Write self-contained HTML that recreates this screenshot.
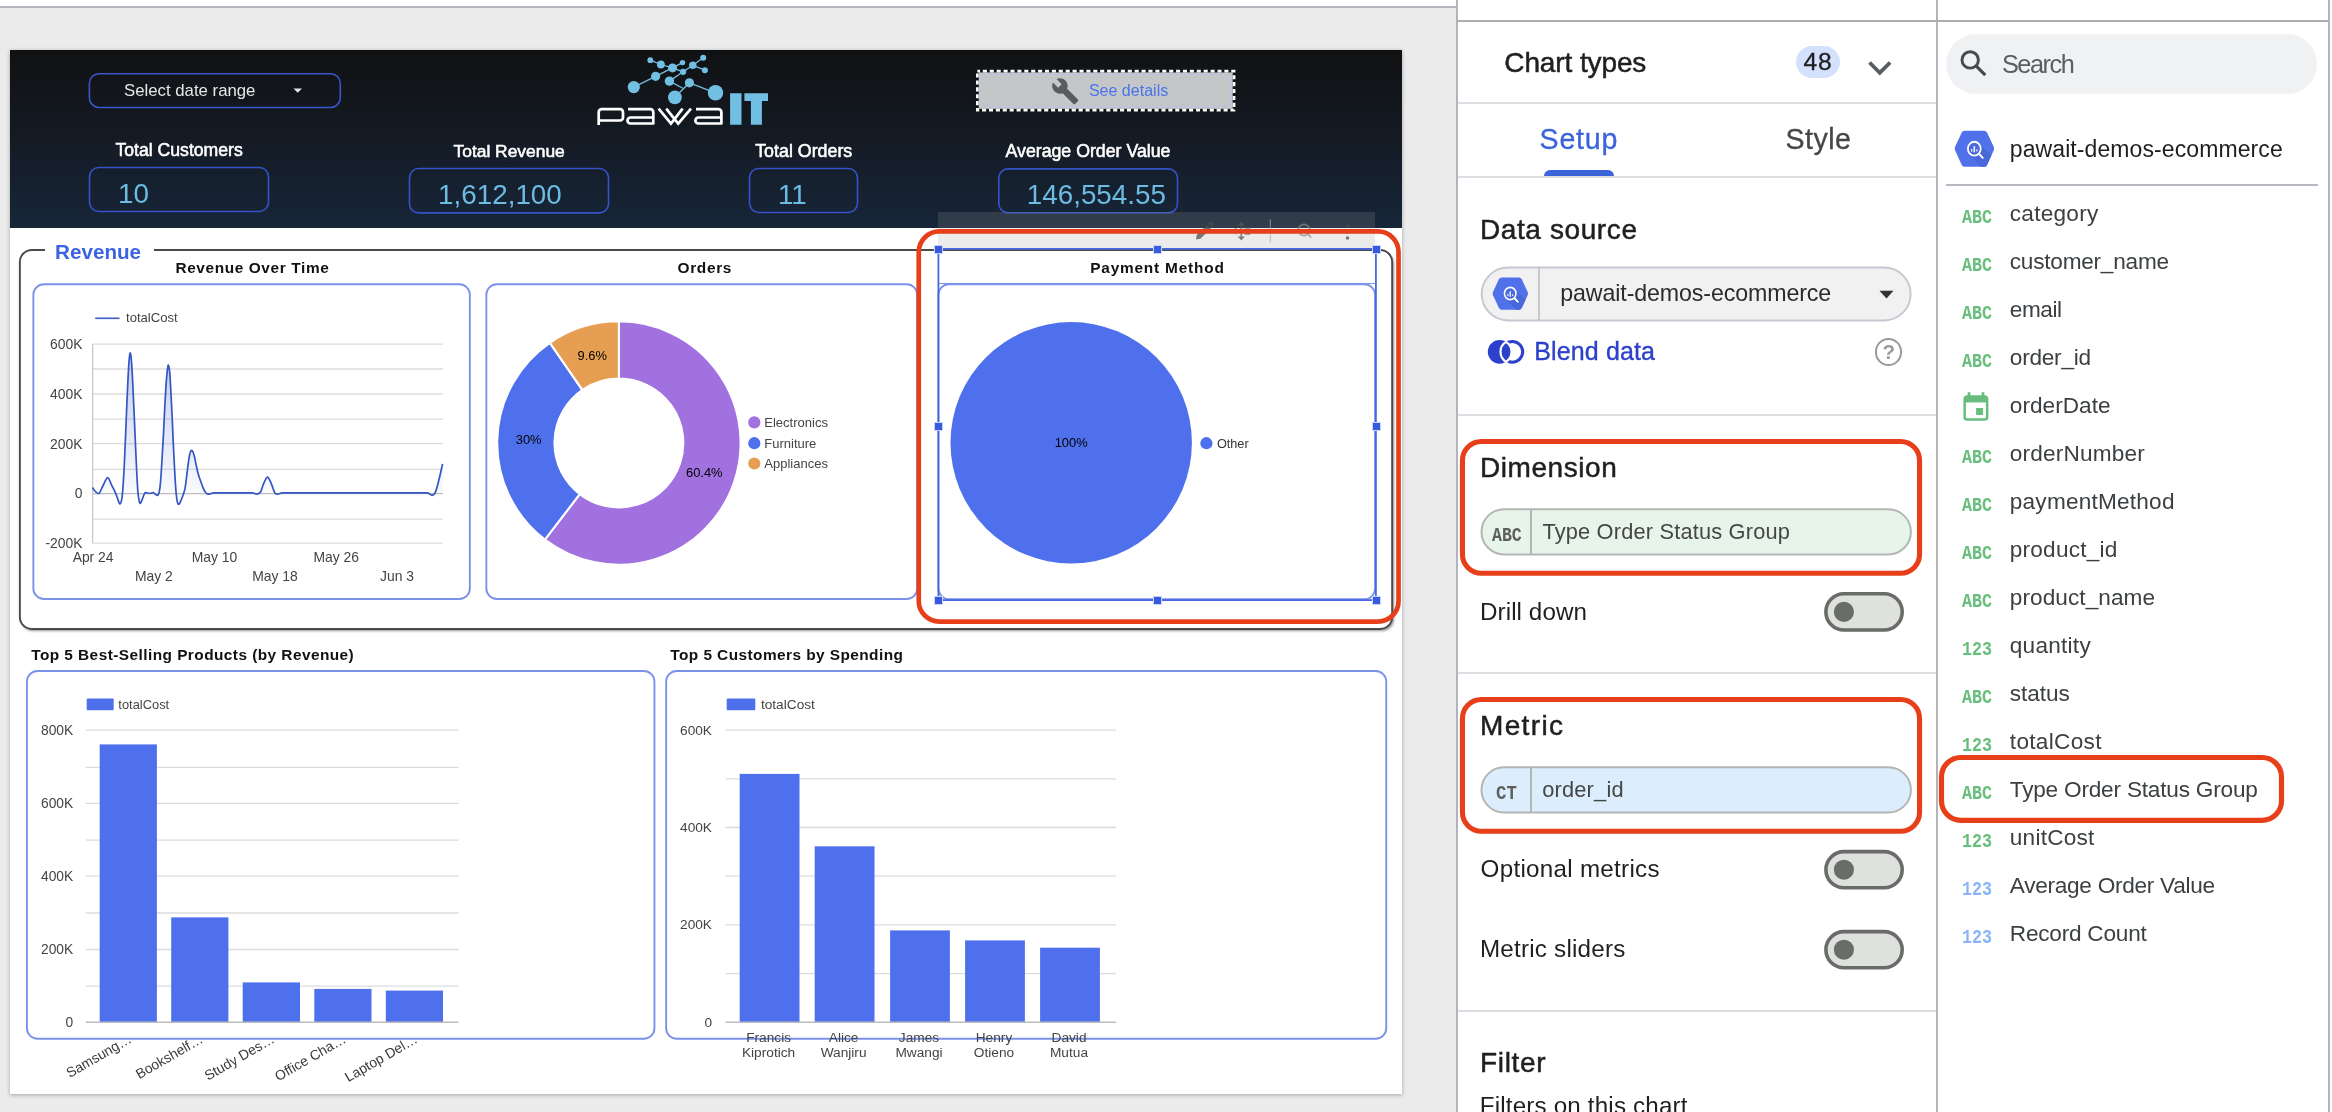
<!DOCTYPE html>
<html>
<head>
<meta charset="utf-8">
<title>Looker Studio</title>
<style>
*{box-sizing:border-box;margin:0;padding:0}
html,body{width:2332px;height:1112px;overflow:hidden;background:#fff}
body{position:relative;font-family:"Liberation Sans",sans-serif;color:#202124}
#root{position:absolute;left:0;top:0;width:2332px;height:1112px;will-change:transform}
.abs{position:absolute}
.t{position:absolute;white-space:nowrap;line-height:1}
/* ---------- workspace ---------- */
#ws{left:0;top:8px;width:1456px;height:1104px;background:#ebebeb}
#topline{left:0;top:6px;width:1457px;height:2px;background:#b4b6bd}
#canvas{left:10px;top:50px;width:1392px;height:1044px;background:#fff;box-shadow:0 1px 4px rgba(0,0,0,.3)}
#hdr{left:10px;top:50px;width:1392px;height:178.2px;background:linear-gradient(180deg,#101113 0%,#111315 8%,#141b25 52%,#172639 100%)}
.q{font-weight:700;-webkit-font-smoothing:antialiased}
.kbox{position:absolute;border:1.5px solid #3550c8;border-radius:10px}
.klabel{color:#fff;font-weight:700;font-size:15.5px}
.kval{color:#6cbbe2;font-size:27.5px}
.cbox{position:absolute;border:1.7px solid #7a91ea;border-radius:11.5px;background:#fff}
.ctitle{font-weight:700;font-size:15.5px;color:#111}
/* ---------- panels ---------- */
.vline{position:absolute;top:0;width:2px;height:1112px;background:#b1b4bd}
.hline{position:absolute;height:2px;background:#dcdee2}
.h1{font-weight:700;font-size:26px;color:#1f1f1f}
.lbl{font-size:24px;color:#1f1f1f}
.pill{position:absolute;left:1480px;width:432px;border:2px solid #b7bab8;border-radius:28px;overflow:hidden}
.tog{position:absolute;left:1824px;width:80px;height:39px;border:3.5px solid #6c6f6c;border-radius:20px;background:#dfe1de}
.tog i{position:absolute;left:6px;top:6px;width:20px;height:20px;border-radius:50%;background:#6c6f6c}
.red{position:absolute;border:5px solid #e73f1a;border-radius:21.5px}
.fld{font-size:23px;color:#3c4043;left:2010px}
.ico{position:absolute;left:1962px;font-family:"Liberation Mono",monospace;font-weight:700;font-size:19px;line-height:1;letter-spacing:-1.6px;transform-origin:0 0;transform:scale(.92,1.12)}
.g{color:#5bb974}.b{color:#8ab4f8}
</style>
</head>
<body>
<div id="root">
<!-- WORKSPACE -->
<div id="ws" class="abs"></div>
<div id="topline" class="abs"></div>
<div id="canvas" class="abs"></div>
<div id="hdr" class="abs"></div>
<svg class="abs" style="left:84px;top:68px;" width="262" height="45" viewBox="84 68 262 45"><rect x="89.40" y="73.70" width="250.90" height="33.80" rx="9.70" fill="none" stroke="#3a56cc" stroke-width="1.6"/></svg>
<div class="t " style="left:124.0px;top:83.0px;font-size:16.78px;color:#e6e6e6;">Select date range</div>
<svg class="abs" style="left:293px;top:88px" width="10" height="6"><path d="M0.5 0.5 L9 0.5 L4.75 4.8 Z" fill="#e6e6e6"/></svg>
<div class="t " style="left:115.5px;top:142.0px;font-size:17.62px;color:#fff;-webkit-text-stroke:.55px #fff;">Total Customers</div>
<svg class="abs" style="left:84px;top:162px;" width="190" height="55" viewBox="84 162 190 55"><rect x="89.50" y="167.50" width="179.00" height="44.00" rx="9.20" fill="none" stroke="#3652c9" stroke-width="1.6"/></svg>
<div class="t " style="left:118.1px;top:180.0px;font-size:27.80px;color:#6cbbe2;">10</div>
<div class="t " style="left:453.5px;top:143.0px;font-size:17.41px;color:#fff;-webkit-text-stroke:.55px #fff;">Total Revenue</div>
<svg class="abs" style="left:404px;top:163px;" width="210" height="55" viewBox="404 163 210 55"><rect x="409.50" y="168.50" width="199.00" height="44.40" rx="9.20" fill="none" stroke="#3652c9" stroke-width="1.6"/></svg>
<div class="t " style="left:438.1px;top:181.0px;font-size:27.80px;color:#6cbbe2;">1,612,100</div>
<div class="t " style="left:755.2px;top:143.0px;font-size:17.83px;color:#fff;-webkit-text-stroke:.55px #fff;">Total Orders</div>
<svg class="abs" style="left:744px;top:163px;" width="119" height="55" viewBox="744 163 119 55"><rect x="749.50" y="168.50" width="108.00" height="44.00" rx="9.20" fill="none" stroke="#3652c9" stroke-width="1.6"/></svg>
<div class="t " style="left:777.9px;top:181.0px;font-size:27.80px;color:#6cbbe2;">11</div>
<div class="t " style="left:1005.5px;top:143.0px;font-size:17.74px;color:#fff;-webkit-text-stroke:.55px #fff;">Average Order Value</div>
<svg class="abs" style="left:994px;top:164px;" width="189" height="54" viewBox="994 164 189 54"><rect x="998.80" y="168.90" width="178.70" height="43.90" rx="9.20" fill="none" stroke="#3652c9" stroke-width="1.6"/></svg>
<div class="t " style="left:1026.8px;top:180.8px;font-size:27.80px;color:#6cbbe2;">146,554.55</div>
<svg class="abs" style="left:970px;top:64px" width="272" height="54" viewBox="970 64 272 54"><rect x="977.35" y="71.1" width="256.7" height="39.1" fill="#c5c6c8" stroke="#101214" stroke-width="2.700"/><rect x="977.35" y="71.1" width="256.7" height="39.1" fill="none" stroke="#fbfbfb" stroke-width="2.700" stroke-dasharray="4.100 2.800" stroke-dashoffset="1.400"/><rect x="980.6" y="74.3" width="250.200" height="32.700" rx="8.500" fill="none" stroke="#b4c5f4" stroke-width="1.100" stroke-dasharray="3.500 1.500"/></svg>
<div class="t " style="left:1088.9px;top:82.0px;font-size:16.05px;color:#4a74ea;">See details</div>
<svg class="abs" style="left:1051px;top:76.5px" width="28.500" height="28.500" viewBox="0 0 24 24"><path fill="#585b60" d="M22.7 19l-9.1-9.1c.9-2.3.4-5-1.500-6.900-2-2-5-2.400-7.400-1.300L9 6 6 9 1.600 4.700C.4 7.100.900 10.100 2.900 12.100c1.900 1.900 4.600 2.400 6.900 1.500l9.100 9.100c.4.400 1 .400 1.400 0l2.300-2.300c.5-.400.5-1.100.1-1.400z"/></svg>
<svg class="abs" style="left:0;top:0" width="1456" height="240" viewBox="0 0 1456 240">
<g stroke="#72bfe4" stroke-width="1.3" fill="none">
<line x1="650.3" y1="60.2" x2="660.9" y2="64.5"/>
<line x1="660.9" y1="64.5" x2="672.5" y2="67.9"/>
<line x1="672.5" y1="67.9" x2="682.5" y2="62.6"/>
<line x1="672.5" y1="67.9" x2="655.6" y2="76.3"/>
<line x1="655.6" y1="76.3" x2="633.8" y2="87.1"/>
<line x1="672.5" y1="67.9" x2="683.1" y2="71.8"/>
<line x1="683.1" y1="71.8" x2="692.8" y2="65.3"/>
<line x1="692.8" y1="65.3" x2="703.2" y2="57.7"/>
<line x1="692.8" y1="65.3" x2="704.9" y2="70.2"/>
<line x1="683.1" y1="71.8" x2="669.4" y2="81.1"/>
<line x1="689.4" y1="82.8" x2="674.9" y2="97.3"/>
<line x1="689.4" y1="82.8" x2="715.5" y2="92.8"/>
<line x1="669.4" y1="81.1" x2="682.9" y2="88.3"/>
</g><g fill="#72bfe4">
<circle cx="650.3" cy="60.2" r="2.9"/>
<circle cx="660.9" cy="64.5" r="3.9"/>
<circle cx="672.5" cy="67.9" r="4.5"/>
<circle cx="682.5" cy="62.6" r="2.7"/>
<circle cx="692.8" cy="65.3" r="3.7"/>
<circle cx="703.2" cy="57.7" r="3.0"/>
<circle cx="704.9" cy="70.2" r="3.0"/>
<circle cx="683.1" cy="71.8" r="3.1"/>
<circle cx="655.6" cy="76.3" r="4.6"/>
<circle cx="669.4" cy="81.1" r="4.7"/>
<circle cx="689.4" cy="82.8" r="4.6"/>
<circle cx="633.8" cy="87.1" r="6.1"/>
<circle cx="674.9" cy="97.3" r="6.9"/>
<circle cx="715.5" cy="92.8" r="7.7"/>
</g>
<path fill="#72bfe4" d="M730.1 93.2h11.400v31.600h-11.400z M744.4 93.2h23.600v7.700h-6.100v23.900h-11v-23.900h-6.500z"/>
<g stroke="#fff" stroke-width="2.7" fill="none" stroke-linejoin="round" stroke-linecap="butt">
<path d="M598.7 124.9 V112.2 a3 3 0 0 1 3 -3 H620 a3 3 0 0 1 3 3 V117.5 a3 3 0 0 1 -3 3 H598.7"/>
<path d="M628.1 109.2 H650.3 a3 3 0 0 1 3 3 V123.5 H630.5 a3 3 0 0 1 -3 -3 a3 3 0 0 1 3 -3 H653.3"/>
<path d="M696.0 109.2 H718.4 a3 3 0 0 1 3 3 V123.5 H698.4 a3 3 0 0 1 -3 -3 a3 3 0 0 1 3 -3 H721.4"/>
<path stroke-linejoin="miter" d="M658.6 108.6 L671 123.6 L682.6 108.6 M666.2 108.6 L678.2 123.6 L691 108.6"/>
</g></svg>
<div class="abs" style="left:20px;top:250px;width:1372px;height:379px;border-radius:12px;box-shadow:1.500px 2px 2.500px rgba(0,0,0,.42)"></div>
<svg class="abs" style="left:14px;top:245px;" width="1384" height="389" viewBox="14 245 1384 389"><rect x="19.85" y="249.95" width="1372.30" height="379.00" rx="12.05" fill="#fff" stroke="#4a4a4a" stroke-width="1.9"/></svg>
<div class="abs" style="left:44.5px;top:246px;width:109.500px;height:8px;background:#fff"></div>
<div class="t " style="left:55.1px;top:241.5px;font-size:20.63px;color:#3b64e2;font-weight:700;">Revenue</div>
<svg class="abs" style="left:28px;top:279px;" width="447" height="325" viewBox="28 279 447 325"><rect x="33.35" y="284.25" width="436.50" height="314.70" rx="10.55" fill="#fff" stroke="#7b92ea" stroke-width="1.9"/></svg>
<svg class="abs" style="left:481px;top:279px;" width="442" height="325" viewBox="481 279 442 325"><rect x="486.35" y="284.25" width="430.90" height="314.70" rx="10.55" fill="#fff" stroke="#7b92ea" stroke-width="1.9"/></svg>
<svg class="abs" style="left:933px;top:279px;" width="447" height="326" viewBox="933 279 447 326"><rect x="938.45" y="284.25" width="436.60" height="314.90" rx="10.55" fill="#fff" stroke="#7b92ea" stroke-width="1.9"/></svg>
<div class="t " style="left:175.4px;top:260.0px;font-size:15.40px;color:#111;letter-spacing:0.62px;font-weight:700;">Revenue Over Time</div>
<div class="t " style="left:677.6px;top:260.0px;font-size:15.40px;color:#111;letter-spacing:0.66px;font-weight:700;">Orders</div>
<div class="t " style="left:1090.2px;top:260.0px;font-size:15.40px;color:#111;letter-spacing:0.81px;font-weight:700;">Payment Method</div>
<svg class="abs" style="left:22px;top:666px;" width="638" height="378" viewBox="22 666 638 378"><rect x="26.95" y="671.05" width="627.50" height="367.70" rx="10.55" fill="none" stroke="#7b92ea" stroke-width="1.9"/></svg>
<svg class="abs" style="left:661px;top:666px;" width="731" height="378" viewBox="661 666 731 378"><rect x="666.15" y="671.05" width="720.10" height="367.70" rx="10.55" fill="none" stroke="#7b92ea" stroke-width="1.9"/></svg>
<div class="t " style="left:31.2px;top:646.5px;font-size:15.40px;color:#111;letter-spacing:0.45px;font-weight:700;">Top 5 Best-Selling Products (by Revenue)</div>
<div class="t " style="left:670.3px;top:646.5px;font-size:15.40px;color:#111;letter-spacing:0.44px;font-weight:700;">Top 5 Customers by Spending</div>
<svg class="abs" style="left:0;top:0" width="1456" height="1112" viewBox="0 0 1456 1112" font-family="Liberation Sans, sans-serif">
<defs><linearGradient id="ar" x1="0" y1="353" x2="0" y2="493" gradientUnits="userSpaceOnUse"><stop offset="0" stop-color="#3a5cc8" stop-opacity=".30"/><stop offset="1" stop-color="#3a5cc8" stop-opacity=".03"/></linearGradient></defs>
<line x1="92.6" x2="443.0" y1="344.1" y2="344.1" stroke="#dcdcdc" stroke-width="1.3"/>
<line x1="92.6" x2="443.0" y1="369" y2="369" stroke="#dcdcdc" stroke-width="1.3"/>
<line x1="92.6" x2="443.0" y1="394" y2="394" stroke="#dcdcdc" stroke-width="1.3"/>
<line x1="92.6" x2="443.0" y1="419.2" y2="419.2" stroke="#dcdcdc" stroke-width="1.3"/>
<line x1="92.6" x2="443.0" y1="443.6" y2="443.6" stroke="#dcdcdc" stroke-width="1.3"/>
<line x1="92.6" x2="443.0" y1="469.4" y2="469.4" stroke="#dcdcdc" stroke-width="1.3"/>
<line x1="92.6" x2="443.0" y1="493.6" y2="493.6" stroke="#bdbdbd" stroke-width="1.3"/>
<line x1="92.6" x2="443.0" y1="519.2" y2="519.2" stroke="#dcdcdc" stroke-width="1.3"/>
<line x1="92.6" x2="443.0" y1="543.2" y2="543.2" stroke="#dcdcdc" stroke-width="1.3"/>
<line x1="92.6" x2="92.6" y1="344" y2="543" stroke="#c8c8c8" stroke-width="1.3"/>
<text x="82.5" y="349.0" font-size="13.9" fill="#444" text-anchor="end">600K</text>
<text x="82.5" y="398.79999999999995" font-size="13.9" fill="#444" text-anchor="end">400K</text>
<text x="82.5" y="448.5" font-size="13.9" fill="#444" text-anchor="end">200K</text>
<text x="82.5" y="498.09999999999997" font-size="13.9" fill="#444" text-anchor="end">0</text>
<text x="82.5" y="547.9" font-size="13.9" fill="#444" text-anchor="end">-200K</text>
<text x="93.1" y="561.9" font-size="13.9" fill="#444" text-anchor="middle">Apr 24</text>
<text x="214.5" y="561.9" font-size="13.9" fill="#444" text-anchor="middle">May 10</text>
<text x="336.3" y="561.9" font-size="13.9" fill="#444" text-anchor="middle">May 26</text>
<text x="153.8" y="580.5" font-size="13.9" fill="#444" text-anchor="middle">May 2</text>
<text x="275" y="580.5" font-size="13.9" fill="#444" text-anchor="middle">May 18</text>
<text x="397" y="580.5" font-size="13.9" fill="#444" text-anchor="middle">Jun 3</text>
<line x1="95.2" x2="119.5" y1="318.3" y2="318.3" stroke="#3a5cc8" stroke-width="1.6"/>
<text x="126" y="322.3" font-size="13.1" fill="#444">totalCost</text>
<path d="M92.5 487.6 C93.4 488.8 94.4 490.5 95.3 491.3 C96.5 492.4 97.8 494.2 99.0 493.4 C100.2 492.6 101.4 488.7 102.6 486.5 C104.3 483.4 106.0 477.9 107.7 477.6 C109.0 477.4 110.2 482.3 111.5 484.8 C112.8 487.4 114.2 489.9 115.5 492.9 C116.3 494.7 117.1 497.4 117.9 499.4 C118.6 501.1 119.3 504.2 120.0 503.9 C120.7 503.6 121.3 502.1 122.0 497.8 C122.4 495.0 122.9 488.7 123.3 482.4 C123.7 477.1 124.0 470.6 124.4 463.0 C124.8 455.5 125.1 445.9 125.5 437.1 C125.8 429.1 126.2 420.6 126.5 412.8 C126.9 403.4 127.3 393.7 127.7 385.3 C128.1 376.9 128.5 367.5 128.9 362.7 C129.4 356.7 129.9 352.6 130.4 352.9 C130.8 353.1 131.3 358.4 131.7 364.3 C132.1 370.3 132.6 379.8 133.0 388.6 C133.4 396.0 133.7 404.6 134.1 412.8 C134.5 421.8 134.9 431.2 135.3 440.3 C135.7 450.1 136.2 460.8 136.6 469.5 C137.0 477.5 137.4 485.4 137.8 490.5 C138.2 495.6 138.6 498.1 139.0 500.2 C139.4 502.5 139.9 503.6 140.3 503.5 C140.9 503.3 141.6 500.9 142.2 499.4 C143.0 497.5 143.8 494.8 144.6 493.4 C145.0 492.6 145.5 492.7 145.9 492.7 C146.6 492.7 147.2 493.1 147.9 493.2 C149.0 493.3 150.0 493.3 151.1 493.2 C151.9 493.1 152.7 492.5 153.5 492.7 C154.3 492.9 155.2 494.1 156.0 494.6 C156.5 495.0 157.1 495.8 157.6 495.4 C158.1 495.0 158.7 494.5 159.2 492.1 C159.6 490.2 160.1 487.2 160.5 482.4 C160.9 477.5 161.4 470.0 161.8 463.0 C162.3 454.9 162.8 446.4 163.3 437.1 C163.7 429.7 164.1 420.6 164.5 412.8 C164.9 404.4 165.4 395.1 165.8 388.6 C166.3 381.1 166.8 375.2 167.3 370.7 C167.7 367.4 168.0 364.8 168.4 365.1 C168.8 365.4 169.3 367.8 169.7 372.4 C170.1 376.7 170.5 384.6 170.9 391.8 C171.3 399.7 171.8 408.3 172.2 417.7 C172.6 425.6 172.9 435.7 173.3 443.6 C173.7 453.0 174.2 461.7 174.6 469.5 C175.0 477.3 175.5 485.3 175.9 490.5 C176.4 496.1 176.8 499.7 177.3 501.8 C177.9 504.3 178.4 504.5 179.0 504.3 C179.7 504.0 180.4 501.8 181.1 500.2 C181.9 498.3 182.7 496.1 183.5 493.7 C184.0 492.1 184.6 491.1 185.1 488.1 C185.6 485.1 186.2 480.1 186.7 475.9 C187.2 471.7 187.8 466.7 188.3 463.0 C188.9 459.1 189.4 455.3 190.0 453.3 C190.6 451.1 191.3 450.2 191.9 450.5 C192.6 450.8 193.3 452.5 194.0 454.9 C194.7 457.2 195.4 461.4 196.1 464.6 C196.8 467.6 197.4 471.0 198.1 473.5 C198.9 476.4 199.7 478.5 200.5 480.8 C201.3 483.1 202.1 485.4 202.9 487.3 C203.7 489.2 204.5 491.0 205.3 492.1 C206.1 493.3 207.0 493.9 207.8 494.1 C208.9 494.4 209.9 493.9 211.0 493.7 C211.8 493.5 212.6 492.9 213.4 492.9 C226.5 492.9 239.5 492.9 252.6 492.9 C254.1 492.9 255.6 494.4 257.1 494.2 C258.3 494.0 259.5 493.7 260.7 491.8 C261.6 490.4 262.5 486.0 263.4 484.1 C264.8 481.1 266.1 477.3 267.5 477.1 C268.7 477.0 269.9 480.6 271.1 483.2 C272.3 485.8 273.5 490.6 274.7 492.7 C275.6 494.3 276.5 494.2 277.4 494.2 C279.0 494.2 280.7 492.9 282.3 492.9 C330.6 492.9 379.0 492.9 427.3 492.9 C429.0 492.9 430.6 495.5 432.3 495.4 C433.3 495.3 434.4 494.6 435.4 492.2 C436.6 489.4 437.8 484.3 439.0 479.6 C440.2 474.9 441.4 469.1 442.6 463.9 L442.6 493.3 L92.5 493.3 Z" fill="url(#ar)"/>
<path d="M92.5 487.6 C93.4 488.8 94.4 490.5 95.3 491.3 C96.5 492.4 97.8 494.2 99.0 493.4 C100.2 492.6 101.4 488.7 102.6 486.5 C104.3 483.4 106.0 477.9 107.7 477.6 C109.0 477.4 110.2 482.3 111.5 484.8 C112.8 487.4 114.2 489.9 115.5 492.9 C116.3 494.7 117.1 497.4 117.9 499.4 C118.6 501.1 119.3 504.2 120.0 503.9 C120.7 503.6 121.3 502.1 122.0 497.8 C122.4 495.0 122.9 488.7 123.3 482.4 C123.7 477.1 124.0 470.6 124.4 463.0 C124.8 455.5 125.1 445.9 125.5 437.1 C125.8 429.1 126.2 420.6 126.5 412.8 C126.9 403.4 127.3 393.7 127.7 385.3 C128.1 376.9 128.5 367.5 128.9 362.7 C129.4 356.7 129.9 352.6 130.4 352.9 C130.8 353.1 131.3 358.4 131.7 364.3 C132.1 370.3 132.6 379.8 133.0 388.6 C133.4 396.0 133.7 404.6 134.1 412.8 C134.5 421.8 134.9 431.2 135.3 440.3 C135.7 450.1 136.2 460.8 136.6 469.5 C137.0 477.5 137.4 485.4 137.8 490.5 C138.2 495.6 138.6 498.1 139.0 500.2 C139.4 502.5 139.9 503.6 140.3 503.5 C140.9 503.3 141.6 500.9 142.2 499.4 C143.0 497.5 143.8 494.8 144.6 493.4 C145.0 492.6 145.5 492.7 145.9 492.7 C146.6 492.7 147.2 493.1 147.9 493.2 C149.0 493.3 150.0 493.3 151.1 493.2 C151.9 493.1 152.7 492.5 153.5 492.7 C154.3 492.9 155.2 494.1 156.0 494.6 C156.5 495.0 157.1 495.8 157.6 495.4 C158.1 495.0 158.7 494.5 159.2 492.1 C159.6 490.2 160.1 487.2 160.5 482.4 C160.9 477.5 161.4 470.0 161.8 463.0 C162.3 454.9 162.8 446.4 163.3 437.1 C163.7 429.7 164.1 420.6 164.5 412.8 C164.9 404.4 165.4 395.1 165.8 388.6 C166.3 381.1 166.8 375.2 167.3 370.7 C167.7 367.4 168.0 364.8 168.4 365.1 C168.8 365.4 169.3 367.8 169.7 372.4 C170.1 376.7 170.5 384.6 170.9 391.8 C171.3 399.7 171.8 408.3 172.2 417.7 C172.6 425.6 172.9 435.7 173.3 443.6 C173.7 453.0 174.2 461.7 174.6 469.5 C175.0 477.3 175.5 485.3 175.9 490.5 C176.4 496.1 176.8 499.7 177.3 501.8 C177.9 504.3 178.4 504.5 179.0 504.3 C179.7 504.0 180.4 501.8 181.1 500.2 C181.9 498.3 182.7 496.1 183.5 493.7 C184.0 492.1 184.6 491.1 185.1 488.1 C185.6 485.1 186.2 480.1 186.7 475.9 C187.2 471.7 187.8 466.7 188.3 463.0 C188.9 459.1 189.4 455.3 190.0 453.3 C190.6 451.1 191.3 450.2 191.9 450.5 C192.6 450.8 193.3 452.5 194.0 454.9 C194.7 457.2 195.4 461.4 196.1 464.6 C196.8 467.6 197.4 471.0 198.1 473.5 C198.9 476.4 199.7 478.5 200.5 480.8 C201.3 483.1 202.1 485.4 202.9 487.3 C203.7 489.2 204.5 491.0 205.3 492.1 C206.1 493.3 207.0 493.9 207.8 494.1 C208.9 494.4 209.9 493.9 211.0 493.7 C211.8 493.5 212.6 492.9 213.4 492.9 C226.5 492.9 239.5 492.9 252.6 492.9 C254.1 492.9 255.6 494.4 257.1 494.2 C258.3 494.0 259.5 493.7 260.7 491.8 C261.6 490.4 262.5 486.0 263.4 484.1 C264.8 481.1 266.1 477.3 267.5 477.1 C268.7 477.0 269.9 480.6 271.1 483.2 C272.3 485.8 273.5 490.6 274.7 492.7 C275.6 494.3 276.5 494.2 277.4 494.2 C279.0 494.2 280.7 492.9 282.3 492.9 C330.6 492.9 379.0 492.9 427.3 492.9 C429.0 492.9 430.6 495.5 432.3 495.4 C433.3 495.3 434.4 494.6 435.4 492.2 C436.6 489.4 437.8 484.3 439.0 479.6 C440.2 474.9 441.4 469.1 442.6 463.9" fill="none" stroke="#3356c2" stroke-width="1.7" stroke-linejoin="round"/>
<path d="M618.90 321.30 A121.7 121.7 0 1 1 544.91 539.63 L579.75 494.13 A64.4 64.4 0 1 0 618.90 378.60 Z" fill="#a071df" stroke="#fff" stroke-width="2.1"/>
<path d="M544.91 539.63 A121.7 121.7 0 0 1 549.86 342.78 L582.37 389.96 A64.4 64.4 0 0 0 579.75 494.13 Z" fill="#4f70ec" stroke="#fff" stroke-width="2.1"/>
<path d="M549.86 342.78 A121.7 121.7 0 0 1 618.90 321.30 L618.90 378.60 A64.4 64.4 0 0 0 582.37 389.96 Z" fill="#e69f52" stroke="#fff" stroke-width="2.1"/>
<text x="592.3" y="360.4" font-size="12.9" fill="#000" text-anchor="middle">9.6%</text>
<text x="528.7" y="444.2" font-size="12.9" fill="#000" text-anchor="middle">30%</text>
<text x="704.3" y="476.59999999999997" font-size="12.9" fill="#000" text-anchor="middle">60.4%</text>
<circle cx="754.3" cy="422.4" r="6.1" fill="#a071df"/>
<text x="764.3" y="426.9" font-size="13" fill="#444">Electronics</text>
<circle cx="754.3" cy="443.2" r="6.1" fill="#4f70ec"/>
<text x="764.3" y="447.7" font-size="13" fill="#444">Furniture</text>
<circle cx="754.3" cy="463.5" r="6.1" fill="#e69f52"/>
<text x="764.3" y="468.0" font-size="13" fill="#444">Appliances</text>
<circle cx="1071.2" cy="442.8" r="120.7" fill="#4f70ec"/>
<text x="1071.2" y="446.8" font-size="12.9" fill="#000" text-anchor="middle">100%</text>
<circle cx="1206.4" cy="443.2" r="6.1" fill="#4f70ec"/>
<text x="1216.9" y="447.6" font-size="12.7" fill="#333">Other</text>
<line x1="85.8" x2="458.6" y1="730.1" y2="730.1" stroke="#dcdcdc" stroke-width="1.3"/>
<line x1="85.8" x2="458.6" y1="767.3" y2="767.3" stroke="#dcdcdc" stroke-width="1.3"/>
<line x1="85.8" x2="458.6" y1="803.4" y2="803.4" stroke="#dcdcdc" stroke-width="1.3"/>
<line x1="85.8" x2="458.6" y1="840.1" y2="840.1" stroke="#dcdcdc" stroke-width="1.3"/>
<line x1="85.8" x2="458.6" y1="876.2" y2="876.2" stroke="#dcdcdc" stroke-width="1.3"/>
<line x1="85.8" x2="458.6" y1="913" y2="913" stroke="#dcdcdc" stroke-width="1.3"/>
<line x1="85.8" x2="458.6" y1="949.5" y2="949.5" stroke="#dcdcdc" stroke-width="1.3"/>
<line x1="85.8" x2="458.6" y1="986.2" y2="986.2" stroke="#dcdcdc" stroke-width="1.3"/>
<rect x="99.7" y="744.4" width="57.2" height="277.9" fill="#4f70ec"/>
<rect x="171.2" y="917.4" width="57.2" height="104.9" fill="#4f70ec"/>
<rect x="242.7" y="982.4" width="57.3" height="39.9" fill="#4f70ec"/>
<rect x="314.3" y="988.9" width="57.2" height="33.4" fill="#4f70ec"/>
<rect x="385.8" y="990.6" width="57.2" height="31.7" fill="#4f70ec"/>
<line x1="85.8" x2="458.6" y1="1022.3" y2="1022.3" stroke="#bdbdbd" stroke-width="1.4"/>
<text x="73.2" y="735.0" font-size="13.8" fill="#444" text-anchor="end">800K</text>
<text x="73.2" y="808.3" font-size="13.8" fill="#444" text-anchor="end">600K</text>
<text x="73.2" y="881.1" font-size="13.8" fill="#444" text-anchor="end">400K</text>
<text x="73.2" y="954.4" font-size="13.8" fill="#444" text-anchor="end">200K</text>
<text x="73.2" y="1027.2" font-size="13.8" fill="#444" text-anchor="end">0</text>
<rect x="86.7" y="698.4" width="27" height="11.9" rx="1" fill="#4f70ec"/>
<text x="118.3" y="708.7" font-size="12.9" fill="#444">totalCost</text>
<text transform="translate(132.5,1041.8) rotate(-30)" font-size="13.9" fill="#3a3a3a" text-anchor="end">Samsung…</text>
<text transform="translate(204.0,1041.8) rotate(-30)" font-size="13.9" fill="#3a3a3a" text-anchor="end">Bookshelf…</text>
<text transform="translate(275.5,1041.8) rotate(-30)" font-size="13.9" fill="#3a3a3a" text-anchor="end">Study Des…</text>
<text transform="translate(347.0,1041.8) rotate(-30)" font-size="13.9" fill="#3a3a3a" text-anchor="end">Office Cha…</text>
<text transform="translate(418.5,1041.8) rotate(-30)" font-size="13.9" fill="#3a3a3a" text-anchor="end">Laptop Del…</text>
<line x1="725.4" x2="1116" y1="730.1" y2="730.1" stroke="#dcdcdc" stroke-width="1.3"/>
<line x1="725.4" x2="1116" y1="778.8" y2="778.8" stroke="#dcdcdc" stroke-width="1.3"/>
<line x1="725.4" x2="1116" y1="827.5" y2="827.5" stroke="#dcdcdc" stroke-width="1.3"/>
<line x1="725.4" x2="1116" y1="876.2" y2="876.2" stroke="#dcdcdc" stroke-width="1.3"/>
<line x1="725.4" x2="1116" y1="924.9" y2="924.9" stroke="#dcdcdc" stroke-width="1.3"/>
<line x1="725.4" x2="1116" y1="973.6" y2="973.6" stroke="#dcdcdc" stroke-width="1.3"/>
<rect x="739.7" y="773.9" width="59.8" height="248.4" fill="#4f70ec"/>
<rect x="814.7" y="846.3" width="59.8" height="176.0" fill="#4f70ec"/>
<rect x="890.1" y="930.4" width="59.8" height="91.9" fill="#4f70ec"/>
<rect x="965.1" y="940.4" width="59.8" height="81.9" fill="#4f70ec"/>
<rect x="1040.1" y="947.7" width="59.8" height="74.6" fill="#4f70ec"/>
<line x1="725.4" x2="1116" y1="1022.3" y2="1022.3" stroke="#bdbdbd" stroke-width="1.4"/>
<text x="712" y="734.6" font-size="13.7" fill="#444" text-anchor="end">600K</text>
<text x="712" y="832.0" font-size="13.7" fill="#444" text-anchor="end">400K</text>
<text x="712" y="929.4" font-size="13.7" fill="#444" text-anchor="end">200K</text>
<text x="712" y="1026.8" font-size="13.7" fill="#444" text-anchor="end">0</text>
<rect x="726.7" y="698.4" width="28.6" height="11.9" rx="1" fill="#4f70ec"/>
<text x="760.9" y="708.5" font-size="13.7" fill="#444">totalCost</text>
<text x="768.6" y="1041.5" font-size="13.7" fill="#444" text-anchor="middle">Francis</text>
<text x="768.6" y="1057.3" font-size="13.7" fill="#444" text-anchor="middle">Kiprotich</text>
<text x="843.6" y="1041.5" font-size="13.7" fill="#444" text-anchor="middle">Alice</text>
<text x="843.6" y="1057.3" font-size="13.7" fill="#444" text-anchor="middle">Wanjiru</text>
<text x="919.0" y="1041.5" font-size="13.7" fill="#444" text-anchor="middle">James</text>
<text x="919.0" y="1057.3" font-size="13.7" fill="#444" text-anchor="middle">Mwangi</text>
<text x="994.0" y="1041.5" font-size="13.7" fill="#444" text-anchor="middle">Henry</text>
<text x="994.0" y="1057.3" font-size="13.7" fill="#444" text-anchor="middle">Otieno</text>
<text x="1069.0" y="1041.5" font-size="13.7" fill="#444" text-anchor="middle">David</text>
<text x="1069.0" y="1057.3" font-size="13.7" fill="#444" text-anchor="middle">Mutua</text>
</svg>
<div class="abs" style="left:937.6px;top:212.1px;width:437.600px;height:35.900px;background:rgba(156,156,156,.2)"></div>
<svg class="abs" style="left:1190px;top:214px;opacity:.72" width="180" height="34" viewBox="1190 214 180 34">
<path d="M1196 239.400 l0.700 -4.300 l10.300 -10.300 l3.700 3.700 l-10.300 10.300 z M1208.300 223.500 l1.600 -1.600 q0.800 -0.700 1.600 0 l2.100 2.100 q0.700 0.800 0 1.600 l-1.600 1.600 z" fill="#4b4b4b"/>
<g fill="#555"><path d="M1241.300 221.500 l3.600 3.900 h-7.200 z M1241.300 240.400 l3.600 -3.900 h-7.200 z M1232.300 230.900 l3.900 -3.600 v7.200 z"/><rect x="1240.500" y="225" width="1.600" height="12"/><rect x="1235.500" y="230.100" width="5" height="1.600"/><rect x="1244.500" y="227.200" width="5.700" height="1.500"/><rect x="1244.500" y="230.200" width="5.700" height="1.500"/><rect x="1244.500" y="233.200" width="5.700" height="1.500"/></g>
<line x1="1270.300" y1="219.200" x2="1270.300" y2="242.300" stroke="#a8a8a8" stroke-width="1"/>
<circle cx="1304" cy="230" r="5.600" fill="none" stroke="#8a8a8a" stroke-width="1.700"/><line x1="1308" y1="234" x2="1311" y2="237.500" stroke="#8a8a8a" stroke-width="1.800"/>
<circle cx="1347.500" cy="226.200" r="1.800" fill="#4b4b4b"/><circle cx="1347.500" cy="232.100" r="1.800" fill="#4b4b4b"/><circle cx="1347.500" cy="238" r="1.800" fill="#4b4b4b"/>
</svg>
<div class="abs" style="left:938px;top:283.2px;width:438px;height:1.2px;background:#7b92ea"></div>
<svg class="abs" style="left:933px;top:244px;" width="448" height="361" viewBox="933 244 448 361"><rect x="938.40" y="248.90" width="437.50" height="351.20" rx="0.00" fill="none" stroke="#4868e0" stroke-width="1.8"/></svg>
<div class="abs" style="left:933.8px;top:245.3px;width:9px;height:9px;background:#385ade;border:1px solid #c9d5f8"></div>
<div class="abs" style="left:1152.9px;top:245.3px;width:9px;height:9px;background:#385ade;border:1px solid #c9d5f8"></div>
<div class="abs" style="left:1371.9px;top:245.3px;width:9px;height:9px;background:#385ade;border:1px solid #c9d5f8"></div>
<div class="abs" style="left:933.8px;top:421.5px;width:9px;height:9px;background:#385ade;border:1px solid #c9d5f8"></div>
<div class="abs" style="left:1371.9px;top:421.5px;width:9px;height:9px;background:#385ade;border:1px solid #c9d5f8"></div>
<div class="abs" style="left:933.8px;top:596.3px;width:9px;height:9px;background:#385ade;border:1px solid #c9d5f8"></div>
<div class="abs" style="left:1152.9px;top:596.3px;width:9px;height:9px;background:#385ade;border:1px solid #c9d5f8"></div>
<div class="abs" style="left:1371.9px;top:596.3px;width:9px;height:9px;background:#385ade;border:1px solid #c9d5f8"></div>
<svg class="abs" style="left:912px;top:225px;" width="493" height="403" viewBox="912 225 493 403"><rect x="918.75" y="231.45" width="479.80" height="390.10" rx="20.65" fill="none" stroke="#e73f1a" stroke-width="4.7"/></svg>
<!-- PANELS -->
<div class="vline" style="left:1456px"></div>
<div class="vline" style="left:1936px"></div>
<div class="vline" style="left:2328px"></div>
<div class="abs" style="left:1458px;top:20px;width:870px;height:2px;background:#adadad"></div>
<div class="t " style="left:1504.3px;top:48.8px;font-size:28.00px;color:#1f1f1f;letter-spacing:-0.11px;-webkit-text-stroke:.5px #1f1f1f;">Chart types</div>
<div class="abs" style="left:1796px;top:46px;width:44px;height:32px;border-radius:16px;background:#d3e1fc"></div>
<div class="t " style="left:1803.6px;top:50.3px;font-size:24.60px;color:#1f1f1f;letter-spacing:0.84px;-webkit-text-stroke:.3px #1f1f1f;">48</div>
<svg class="abs" style="left:1866px;top:58px" width="28" height="20"><path d="M3.500 4.500 L13.800 14.800 L24.100 4.500" fill="none" stroke="#5a5d60" stroke-width="3.800"/></svg>
<div class="hline" style="left:1458px;top:101.5px;width:478px"></div>
<div class="t " style="left:1539.6px;top:125.4px;font-size:28.60px;color:#3b63da;letter-spacing:0.76px;-webkit-text-stroke:.3px #3b63da;">Setup</div>
<div class="t " style="left:1785.6px;top:125.4px;font-size:28.60px;color:#444746;letter-spacing:0.45px;-webkit-text-stroke:.3px #444746;">Style</div>
<div class="abs" style="left:1543.8px;top:169.8px;width:70.200px;height:6.400px;background:#3b63da;border-radius:6px 6px 0 0"></div>
<div class="hline" style="left:1458px;top:176px;width:478px"></div>
<div class="t " style="left:1480.0px;top:215.5px;font-size:28.00px;color:#1f1f1f;letter-spacing:0.60px;-webkit-text-stroke:.5px #1f1f1f;">Data source</div>
<svg class="abs" style="left:1476px;top:262px;" width="440" height="64" viewBox="1476 262 440 64"><rect x="1481.65" y="267.55" width="429.00" height="52.90" rx="26.45" fill="#f1f1f1" stroke="#c5c8d0" stroke-width="1.9"/></svg>
<div class="abs" style="left:1538.2px;top:268px;width:1.600px;height:52px;background:#c5c8d0"></div>
<svg class="abs" style="left:1491.8px;top:276.4px" width="36.65" height="35.1" viewBox="0 0 40 36" preserveAspectRatio="none"><path d="M10.600 1.500 H29.400 Q31.400 1.500 32.400 3.200 L38.900 16.300 Q39.700 18 38.900 19.700 L32.400 32.800 Q31.400 34.500 29.400 34.500 H10.600 Q8.600 34.500 7.600 32.800 L1.100 19.700 Q0.300 18 1.100 16.300 L7.600 3.200 Q8.600 1.500 10.600 1.500Z" fill="#5071ea"/><path d="M24.500 13.500 L36.600 24.300 L32.400 32.800 Q31.400 34.500 29.400 34.500 H26.500 L15.500 23.500 Z" fill="#4867d8"/><circle cx="19.900" cy="18" r="6.300" fill="#4a69dc" stroke="#fff" stroke-width="1.700"/><path d="M24.600 22.800 L28.200 26.400" stroke="#fff" stroke-width="1.900" stroke-linecap="round"/><path d="M17.300 18.300v2.600 M22.500 18.600v2" stroke="#dfe6fb" stroke-width="1.300"/><path d="M19.900 15.600v5.700" stroke="#e8edfc" stroke-width="1.600"/></svg>
<div class="t " style="left:1560.3px;top:282.4px;font-size:23.20px;color:#2b2b2b;letter-spacing:-0.11px;">pawait-demos-ecommerce</div>
<svg class="abs" style="left:1879px;top:290px" width="16" height="10"><path d="M0.500 0.800 H14.500 L7.500 8.600 Z" fill="#333"/></svg>
<svg class="abs" style="left:1487px;top:339px" width="39" height="26" viewBox="0 0 39 26"><circle cx="12.65" cy="12.85" r="11.85" fill="#2c40cc"/><circle cx="25.35" cy="12.85" r="10.35" fill="#fff" stroke="#2c40cc" stroke-width="3"/><path d="M19.00 2.85 A11.85 11.85 0 0 1 19.00 22.85 A11.85 11.85 0 0 1 19.00 2.85Z" fill="#2c40cc" stroke="#fff" stroke-width="2.200"/></svg>
<div class="t " style="left:1534.2px;top:338.8px;font-size:25.00px;color:#2c40cc;letter-spacing:0.14px;-webkit-text-stroke:.35px #2c40cc;">Blend data</div>
<div class="abs" style="left:1874.5px;top:338px;width:27.500px;height:27.500px;border:2.200px solid #9a9a9a;border-radius:50%"></div>
<div class="t " style="left:1882.6px;top:342.2px;font-size:20.50px;color:#9a9a9a;letter-spacing:-0.92px;font-weight:700;">?</div>
<div class="hline" style="left:1458px;top:413.5px;width:478px"></div>
<svg class="abs" style="left:1455px;top:434px;" width="472" height="146" viewBox="1455 434 472 146"><rect x="1462.45" y="441.45" width="457.10" height="131.80" rx="18.95" fill="none" stroke="#e73f1a" stroke-width="5.1"/></svg>
<div class="t " style="left:1480.0px;top:453.6px;font-size:28.00px;color:#1f1f1f;letter-spacing:0.57px;-webkit-text-stroke:.5px #1f1f1f;">Dimension</div>
<svg class="abs" style="left:1476px;top:504px;" width="440" height="56" viewBox="1476 504 440 56"><rect x="1481.50" y="509.30" width="429.40" height="45.10" rx="22.50" fill="#e6f4ea" stroke="#b3b6b3" stroke-width="2"/></svg>
<div class="abs" style="left:1530px;top:510px;width:1.600px;height:44px;background:#b3b6b3"></div>
<div class="t" style="left:1491.8px;top:525.0px;font-size:21px;color:#5c5f5c;font-weight:700;font-family:'Liberation Mono',monospace;transform-origin:0 0;transform:scaleX(0.786)">ABC</div>
<div class="t " style="left:1542.4px;top:520.5px;font-size:21.80px;color:#444746;letter-spacing:0.18px;">Type Order Status Group</div>
<div class="t " style="left:1480.0px;top:599.6px;font-size:24.20px;color:#1f1f1f;letter-spacing:0.08px;">Drill down</div>
<svg class="abs" style="left:1820px;top:590px" width="90" height="46" viewBox="1820 590 90 46"><rect x="1825.8999999999999" y="593.8" width="76.30000000000001" height="36.199999999999996" rx="18.099999999999998" fill="#dfe1de" stroke="#6a6c69" stroke-width="3.6"/><circle cx="1843.8999999999999" cy="611.9" r="10.05" fill="#6a6c69"/></svg>
<div class="hline" style="left:1458px;top:672px;width:478px"></div>
<svg class="abs" style="left:1455px;top:692px;" width="472" height="146" viewBox="1455 692 472 146"><rect x="1462.45" y="699.45" width="457.10" height="131.80" rx="18.95" fill="none" stroke="#e73f1a" stroke-width="5.1"/></svg>
<div class="t " style="left:1480.0px;top:711.5px;font-size:28.00px;color:#1f1f1f;letter-spacing:1.36px;-webkit-text-stroke:.5px #1f1f1f;">Metric</div>
<svg class="abs" style="left:1476px;top:762px;" width="440" height="56" viewBox="1476 762 440 56"><rect x="1481.50" y="767.30" width="429.40" height="45.20" rx="22.50" fill="#dceefd" stroke="#b3b6b3" stroke-width="2"/></svg>
<div class="abs" style="left:1530px;top:768px;width:1.600px;height:44px;background:#b3b6b3"></div>
<div class="t" style="left:1495.8px;top:783.3px;font-size:21px;color:#5c5f5c;font-weight:700;font-family:'Liberation Mono',monospace;transform-origin:0 0;transform:scaleX(0.825)">CT</div>
<div class="t " style="left:1542.2px;top:778.8px;font-size:21.80px;color:#444746;letter-spacing:0.20px;">order_id</div>
<div class="t " style="left:1480.6px;top:857.2px;font-size:24.20px;color:#1f1f1f;letter-spacing:0.28px;">Optional metrics</div>
<svg class="abs" style="left:1820px;top:847px" width="90" height="46" viewBox="1820 847 90 46"><rect x="1825.8999999999999" y="851.5999999999999" width="76.30000000000001" height="36.199999999999996" rx="18.099999999999998" fill="#dfe1de" stroke="#6a6c69" stroke-width="3.6"/><circle cx="1843.8999999999999" cy="869.6999999999999" r="10.05" fill="#6a6c69"/></svg>
<div class="t " style="left:1480.0px;top:937.2px;font-size:24.20px;color:#1f1f1f;letter-spacing:0.22px;">Metric sliders</div>
<svg class="abs" style="left:1820px;top:927px" width="90" height="46" viewBox="1820 927 90 46"><rect x="1825.8999999999999" y="931.5999999999999" width="76.30000000000001" height="36.199999999999996" rx="18.099999999999998" fill="#dfe1de" stroke="#6a6c69" stroke-width="3.6"/><circle cx="1843.8999999999999" cy="949.6999999999999" r="10.05" fill="#6a6c69"/></svg>
<div class="hline" style="left:1458px;top:1010px;width:478px"></div>
<div class="t " style="left:1480.0px;top:1048.8px;font-size:28.00px;color:#1f1f1f;letter-spacing:0.66px;-webkit-text-stroke:.5px #1f1f1f;">Filter</div>
<div class="t " style="left:1479.8px;top:1093.6px;font-size:24.20px;color:#1f1f1f;letter-spacing:0.17px;">Filters on this chart</div>
<div class="abs" style="left:1946px;top:34px;width:370.500px;height:60px;border-radius:30px;background:#f0f1f3"></div>
<svg class="abs" style="left:1956px;top:46px" width="36" height="36"><circle cx="14.200" cy="13.900" r="8.200" fill="none" stroke="#474a4d" stroke-width="2.900"/><path d="M20.300 20.200 L29.300 29.200" stroke="#474a4d" stroke-width="3.100"/></svg>
<div class="t " style="left:2001.9px;top:51.6px;font-size:25.30px;color:#5a5d61;letter-spacing:-1.43px;">Search</div>
<svg class="abs" style="left:1953.6px;top:129.2px" width="40.8" height="39.4" viewBox="0 0 40 36" preserveAspectRatio="none"><path d="M10.600 1.500 H29.400 Q31.400 1.500 32.400 3.200 L38.900 16.300 Q39.700 18 38.900 19.700 L32.400 32.800 Q31.400 34.500 29.400 34.500 H10.600 Q8.600 34.500 7.600 32.800 L1.100 19.700 Q0.300 18 1.100 16.300 L7.600 3.200 Q8.600 1.500 10.600 1.500Z" fill="#5071ea"/><path d="M24.500 13.500 L36.600 24.300 L32.400 32.800 Q31.400 34.500 29.400 34.500 H26.500 L15.500 23.500 Z" fill="#4867d8"/><circle cx="19.900" cy="18" r="6.300" fill="#4a69dc" stroke="#fff" stroke-width="1.700"/><path d="M24.600 22.800 L28.200 26.400" stroke="#fff" stroke-width="1.900" stroke-linecap="round"/><path d="M17.300 18.300v2.600 M22.500 18.600v2" stroke="#dfe6fb" stroke-width="1.300"/><path d="M19.900 15.600v5.700" stroke="#e8edfc" stroke-width="1.600"/></svg>
<div class="t " style="left:2009.8px;top:138.2px;font-size:23.00px;color:#1f1f1f;letter-spacing:0.09px;">pawait-demos-ecommerce</div>
<div class="abs" style="left:1946px;top:184.3px;width:372px;height:1.800px;background:#b6b9bf"></div>
<div class="t " style="left:2009.8px;top:203.0px;font-size:22.60px;color:#3c4043;letter-spacing:0.26px;">category</div>
<div class="t" style="left:1961.5px;top:208.0px;font-size:20.8px;color:#67be7c;font-weight:700;font-family:'Liberation Mono',monospace;transform-origin:0 0;transform:scaleX(0.801)">ABC</div>
<div class="t " style="left:2009.8px;top:251.0px;font-size:22.60px;color:#3c4043;letter-spacing:-0.23px;">customer_name</div>
<div class="t" style="left:1961.5px;top:256.0px;font-size:20.8px;color:#67be7c;font-weight:700;font-family:'Liberation Mono',monospace;transform-origin:0 0;transform:scaleX(0.801)">ABC</div>
<div class="t " style="left:2009.8px;top:299.0px;font-size:22.60px;color:#3c4043;letter-spacing:-0.45px;">email</div>
<div class="t" style="left:1961.5px;top:304.0px;font-size:20.8px;color:#67be7c;font-weight:700;font-family:'Liberation Mono',monospace;transform-origin:0 0;transform:scaleX(0.801)">ABC</div>
<div class="t " style="left:2009.8px;top:347.0px;font-size:22.60px;color:#3c4043;letter-spacing:-0.23px;">order_id</div>
<div class="t" style="left:1961.5px;top:352.0px;font-size:20.8px;color:#67be7c;font-weight:700;font-family:'Liberation Mono',monospace;transform-origin:0 0;transform:scaleX(0.801)">ABC</div>
<div class="t " style="left:2009.8px;top:395.0px;font-size:22.60px;color:#3c4043;letter-spacing:0.03px;">orderDate</div>
<svg class="abs" style="left:1962px;top:392px" width="28" height="30" viewBox="0 0 28 30"><path d="M7 0.200v4 M21 0.200v4" stroke="#67be7c" stroke-width="2.700"/><rect x="2.650" y="4.450" width="22.500" height="23.100" rx="2.600" fill="none" stroke="#67be7c" stroke-width="2.500"/><rect x="2.650" y="4.450" width="22.500" height="6.000" fill="#67be7c"/><rect x="14.100" y="16" width="7" height="7" fill="#67be7c"/></svg>
<div class="t " style="left:2009.8px;top:443.0px;font-size:22.60px;color:#3c4043;letter-spacing:0.18px;">orderNumber</div>
<div class="t" style="left:1961.5px;top:448.0px;font-size:20.8px;color:#67be7c;font-weight:700;font-family:'Liberation Mono',monospace;transform-origin:0 0;transform:scaleX(0.801)">ABC</div>
<div class="t " style="left:2009.8px;top:491.0px;font-size:22.60px;color:#3c4043;letter-spacing:0.22px;">paymentMethod</div>
<div class="t" style="left:1961.5px;top:496.0px;font-size:20.8px;color:#67be7c;font-weight:700;font-family:'Liberation Mono',monospace;transform-origin:0 0;transform:scaleX(0.801)">ABC</div>
<div class="t " style="left:2009.8px;top:539.0px;font-size:22.60px;color:#3c4043;letter-spacing:0.22px;">product_id</div>
<div class="t" style="left:1961.5px;top:544.0px;font-size:20.8px;color:#67be7c;font-weight:700;font-family:'Liberation Mono',monospace;transform-origin:0 0;transform:scaleX(0.801)">ABC</div>
<div class="t " style="left:2009.8px;top:587.0px;font-size:22.60px;color:#3c4043;letter-spacing:0.07px;">product_name</div>
<div class="t" style="left:1961.5px;top:592.0px;font-size:20.8px;color:#67be7c;font-weight:700;font-family:'Liberation Mono',monospace;transform-origin:0 0;transform:scaleX(0.801)">ABC</div>
<div class="t " style="left:2009.8px;top:635.0px;font-size:22.60px;color:#3c4043;letter-spacing:0.25px;">quantity</div>
<div class="t" style="left:1961.5px;top:640.0px;font-size:20.8px;color:#67be7c;font-weight:700;font-family:'Liberation Mono',monospace;transform-origin:0 0;transform:scaleX(0.801)">123</div>
<div class="t " style="left:2009.8px;top:683.0px;font-size:22.60px;color:#3c4043;letter-spacing:-0.04px;">status</div>
<div class="t" style="left:1961.5px;top:688.0px;font-size:20.8px;color:#67be7c;font-weight:700;font-family:'Liberation Mono',monospace;transform-origin:0 0;transform:scaleX(0.801)">ABC</div>
<div class="t " style="left:2009.8px;top:731.0px;font-size:22.60px;color:#3c4043;letter-spacing:0.31px;">totalCost</div>
<div class="t" style="left:1961.5px;top:736.0px;font-size:20.8px;color:#67be7c;font-weight:700;font-family:'Liberation Mono',monospace;transform-origin:0 0;transform:scaleX(0.801)">123</div>
<div class="t " style="left:2009.8px;top:779.0px;font-size:22.60px;color:#3c4043;letter-spacing:-0.20px;">Type Order Status Group</div>
<div class="t" style="left:1961.5px;top:784.0px;font-size:20.8px;color:#67be7c;font-weight:700;font-family:'Liberation Mono',monospace;transform-origin:0 0;transform:scaleX(0.801)">ABC</div>
<div class="t " style="left:2009.8px;top:827.0px;font-size:22.60px;color:#3c4043;letter-spacing:0.23px;">unitCost</div>
<div class="t" style="left:1961.5px;top:832.0px;font-size:20.8px;color:#67be7c;font-weight:700;font-family:'Liberation Mono',monospace;transform-origin:0 0;transform:scaleX(0.801)">123</div>
<div class="t " style="left:2009.8px;top:875.0px;font-size:22.60px;color:#3c4043;letter-spacing:-0.27px;">Average Order Value</div>
<div class="t" style="left:1961.5px;top:880.0px;font-size:20.8px;color:#8ab4f8;font-weight:700;font-family:'Liberation Mono',monospace;transform-origin:0 0;transform:scaleX(0.801)">123</div>
<div class="t " style="left:2009.8px;top:923.0px;font-size:22.60px;color:#3c4043;letter-spacing:-0.22px;">Record Count</div>
<div class="t" style="left:1961.5px;top:928.0px;font-size:20.8px;color:#8ab4f8;font-weight:700;font-family:'Liberation Mono',monospace;transform-origin:0 0;transform:scaleX(0.801)">123</div>
<svg class="abs" style="left:1934px;top:750px;" width="355" height="77" viewBox="1934 750 355 77"><rect x="1941.50" y="757.50" width="340.00" height="62.80" rx="19.40" fill="none" stroke="#e73f1a" stroke-width="5.2"/></svg>
</div>
</body>
</html>
